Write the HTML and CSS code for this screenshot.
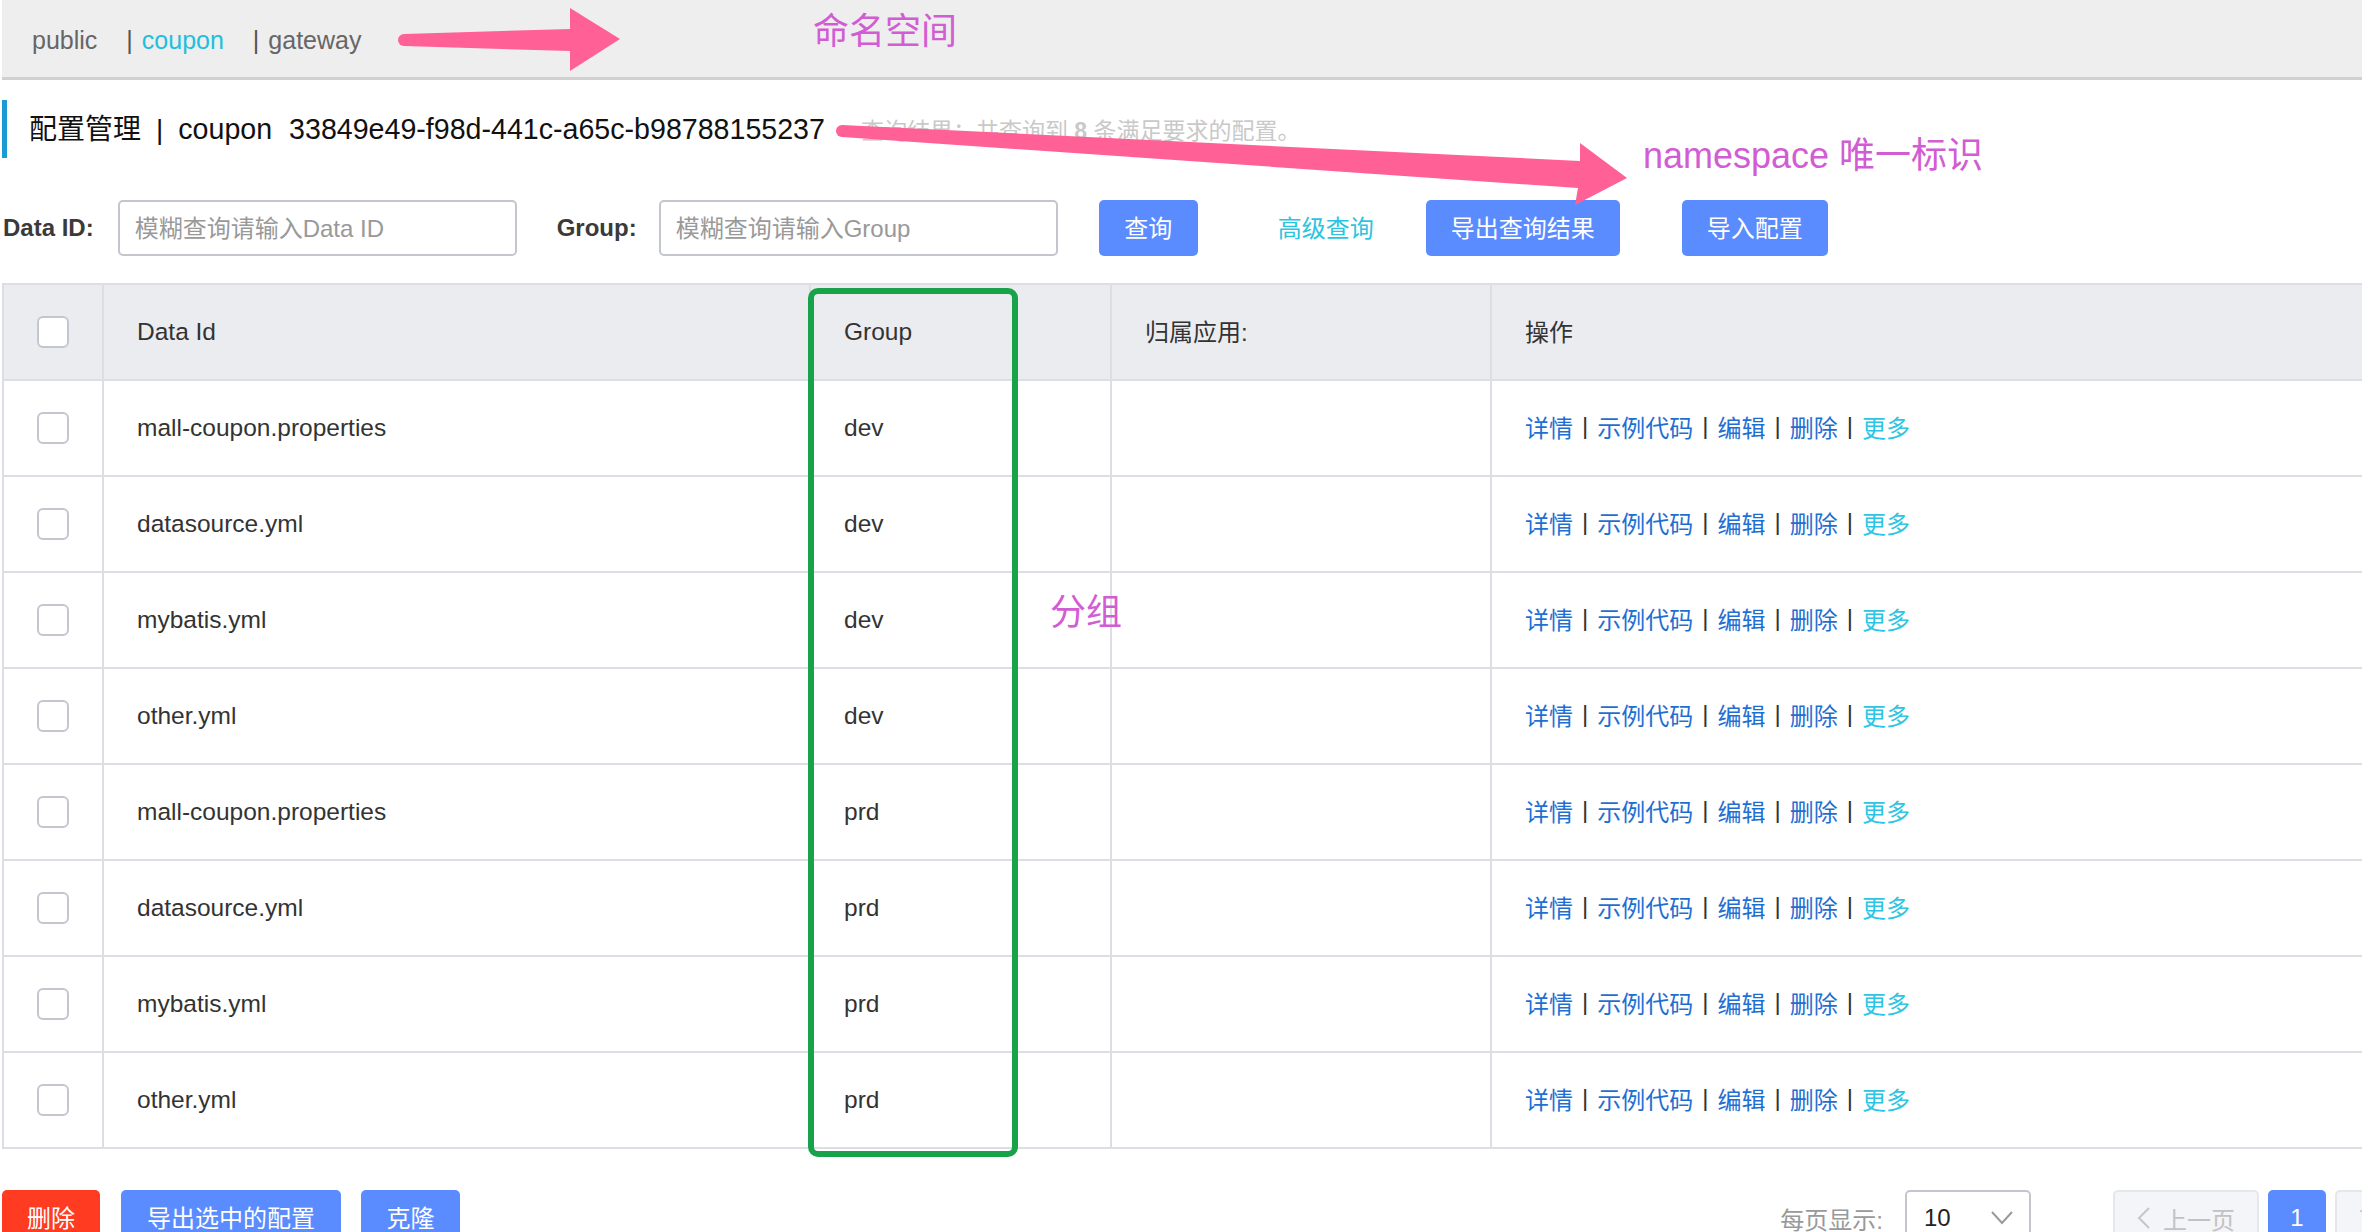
FILE: index.html
```html
<!DOCTYPE html>
<html lang="zh-CN">
<head>
<meta charset="utf-8">
<title>配置管理</title>
<link rel="stylesheet" href="styles.css">
</head>
<body>
<div class="page">
  <div class="ns-bar">
    <span class="ns">public</span>
    <span class="ns"><span class="ns-sep">|</span><span class="ns-active">coupon</span></span>
    <span class="ns"><span class="ns-sep">|</span>gateway</span>
  </div>

  <div class="title-row">
    <h1 class="title">配置管理<span class="t-sep">|</span><span class="lat">coupon</span><span class="lat ns-id">33849e49-f98d-441c-a65c-b98788155237</span></h1>
    <span class="result">查询结果：共查询到 <b>8</b> 条满足要求的配置。</span>
  </div>

  <div class="filter">
    <label class="f-label">Data ID:</label>
    <div class="input">模糊查询请输入Data ID</div>
    <label class="f-label f-label-group">Group:</label>
    <div class="input">模糊查询请输入Group</div>
    <button class="btn btn-query">查询</button>
    <span class="adv">高级查询</span>
    <button class="btn btn-export">导出查询结果</button>
    <button class="btn btn-import">导入配置</button>
  </div>

  <div class="table">
    <div class="row head">
      <div class="cell c-cb"><span class="cb"></span></div>
      <div class="cell">Data Id</div>
      <div class="cell">Group</div>
      <div class="cell cjk">归属应用:</div>
      <div class="cell cjk">操作</div>
    </div>
    <div class="row">
      <div class="cell c-cb"><span class="cb"></span></div>
      <div class="cell">mall-coupon.properties</div>
      <div class="cell">dev</div>
      <div class="cell"></div>
      <div class="cell ops"><a class="op">详情</a><span class="op-sep">|</span><a class="op">示例代码</a><span class="op-sep">|</span><a class="op">编辑</a><span class="op-sep">|</span><a class="op">删除</a><span class="op-sep">|</span><a class="op more">更多</a></div>
    </div>
    <div class="row">
      <div class="cell c-cb"><span class="cb"></span></div>
      <div class="cell">datasource.yml</div>
      <div class="cell">dev</div>
      <div class="cell"></div>
      <div class="cell ops"><a class="op">详情</a><span class="op-sep">|</span><a class="op">示例代码</a><span class="op-sep">|</span><a class="op">编辑</a><span class="op-sep">|</span><a class="op">删除</a><span class="op-sep">|</span><a class="op more">更多</a></div>
    </div>
    <div class="row">
      <div class="cell c-cb"><span class="cb"></span></div>
      <div class="cell">mybatis.yml</div>
      <div class="cell">dev</div>
      <div class="cell"></div>
      <div class="cell ops"><a class="op">详情</a><span class="op-sep">|</span><a class="op">示例代码</a><span class="op-sep">|</span><a class="op">编辑</a><span class="op-sep">|</span><a class="op">删除</a><span class="op-sep">|</span><a class="op more">更多</a></div>
    </div>
    <div class="row">
      <div class="cell c-cb"><span class="cb"></span></div>
      <div class="cell">other.yml</div>
      <div class="cell">dev</div>
      <div class="cell"></div>
      <div class="cell ops"><a class="op">详情</a><span class="op-sep">|</span><a class="op">示例代码</a><span class="op-sep">|</span><a class="op">编辑</a><span class="op-sep">|</span><a class="op">删除</a><span class="op-sep">|</span><a class="op more">更多</a></div>
    </div>
    <div class="row">
      <div class="cell c-cb"><span class="cb"></span></div>
      <div class="cell">mall-coupon.properties</div>
      <div class="cell">prd</div>
      <div class="cell"></div>
      <div class="cell ops"><a class="op">详情</a><span class="op-sep">|</span><a class="op">示例代码</a><span class="op-sep">|</span><a class="op">编辑</a><span class="op-sep">|</span><a class="op">删除</a><span class="op-sep">|</span><a class="op more">更多</a></div>
    </div>
    <div class="row">
      <div class="cell c-cb"><span class="cb"></span></div>
      <div class="cell">datasource.yml</div>
      <div class="cell">prd</div>
      <div class="cell"></div>
      <div class="cell ops"><a class="op">详情</a><span class="op-sep">|</span><a class="op">示例代码</a><span class="op-sep">|</span><a class="op">编辑</a><span class="op-sep">|</span><a class="op">删除</a><span class="op-sep">|</span><a class="op more">更多</a></div>
    </div>
    <div class="row">
      <div class="cell c-cb"><span class="cb"></span></div>
      <div class="cell">mybatis.yml</div>
      <div class="cell">prd</div>
      <div class="cell"></div>
      <div class="cell ops"><a class="op">详情</a><span class="op-sep">|</span><a class="op">示例代码</a><span class="op-sep">|</span><a class="op">编辑</a><span class="op-sep">|</span><a class="op">删除</a><span class="op-sep">|</span><a class="op more">更多</a></div>
    </div>
    <div class="row">
      <div class="cell c-cb"><span class="cb"></span></div>
      <div class="cell">other.yml</div>
      <div class="cell">prd</div>
      <div class="cell"></div>
      <div class="cell ops"><a class="op">详情</a><span class="op-sep">|</span><a class="op">示例代码</a><span class="op-sep">|</span><a class="op">编辑</a><span class="op-sep">|</span><a class="op">删除</a><span class="op-sep">|</span><a class="op more">更多</a></div>
    </div>
  </div>

  <div class="footer">
    <div class="actions">
      <button class="btn btn-danger">删除</button>
      <button class="btn btn-exp-sel">导出选中的配置</button>
      <button class="btn btn-clone">克隆</button>
    </div>
    <div class="pager">
      <span class="per-page">每页显示:</span>
      <div class="select"><span>10</span><svg class="chev" width="22" height="14" viewBox="0 0 22 14"><polyline points="1,1 11,12 21,1" fill="none" stroke="#9a9a9a" stroke-width="2"/></svg></div>
      <button class="pg pg-prev"><svg width="14" height="22" viewBox="0 0 14 22"><polyline points="12,1 2,11 12,21" fill="none" stroke="#c6c6c6" stroke-width="2"/></svg><span>上一页</span></button>
      <button class="pg-num">1</button>
      <button class="pg pg-next"><span>下一页</span><svg width="14" height="22" viewBox="0 0 14 22"><polyline points="2,1 12,11 2,21" fill="none" stroke="#c6c6c6" stroke-width="2"/></svg></button>
    </div>
  </div>

  <svg class="arrows" width="2362" height="260" viewBox="0 0 2362 260">
    <circle cx="404" cy="40" r="6" fill="#ff6196"/>
    <polygon fill="#ff6196" points="404,34 570,29 570,8 620,39 570,71 570,51 404,46"/>
    <circle cx="842" cy="131" r="6" fill="#ff6196"/>
    <polygon fill="#ff6196" points="842,125 1580,161 1580,143 1627,178 1575,205 1578,188 842,137"/>
  </svg>
  <div class="note note-ns">命名空间</div>
  <div class="note note-id">namespace 唯一标识</div>
  <div class="note note-group">分组</div>
  <div class="group-box"></div>
</div>
</body>
</html>
```

FILE: styles.css
```css
html, body {
  margin: 0;
  padding: 0;
  overflow: hidden;
  background: #fff;
}
body {
  font-family: "Liberation Sans", "Noto Sans CJK SC", sans-serif;
  color: #333;
  font-size: 24px;
  padding-left: 2px;
}
.page {
  position: relative;
  width: 2479px;
}

/* namespace bar */
.ns-bar {
  height: 75px;
  background: #eeeeee;
  border-bottom: 3px solid #d0d0d0;
  display: flex;
  align-items: center;
  padding-left: 30px;
  padding-top: 2px;
  font-size: 25px;
  color: #666;
  line-height: 30px;
}
.ns { margin-right: 29px; white-space: nowrap; }
.ns-sep { color: #555; margin-right: 9px; }
.ns-active { color: #22bfdc; }

/* title */
.title-row {
  margin-top: 20px;
  height: 58px;
  border-left: 5px solid #1b9ad6;
  display: flex;
  align-items: center;
  padding-left: 22px;
  white-space: nowrap;
}
.title {
  margin: 0;
  font-weight: normal;
  font-size: 28px;
  line-height: 58px;
  color: #111;
}
.lat { font-size: 28.6px; }
.t-sep { margin: 0 15px; }
.ns-id { margin-left: 17px; }
.result {
  margin-left: 36px;
  font-size: 23px;
  color: #c9c9c9;
}
.result b { font-weight: bold; }

/* filter */
.filter {
  margin-top: 42px;
  height: 56px;
  display: flex;
  align-items: center;
  white-space: nowrap;
}
.f-label {
  font-weight: bold;
  color: #3a3a3a;
  margin-left: 1px;
  margin-right: 24px;
}
.f-label-group { margin-left: 40px; margin-right: 22px; }
.input {
  width: 399px;
  height: 56px;
  box-sizing: border-box;
  border: 2px solid #c4c6cf;
  border-radius: 5px;
  padding-left: 15px;
  padding-bottom: 3px;
  display: flex;
  align-items: center;
  color: #999;
}
.btn {
  height: 56px;
  border: none;
  border-radius: 5px;
  background: #5a8cff;
  color: #fff;
  font-family: inherit;
  font-size: 24px;
  padding: 0 0 3px 0;
  cursor: pointer;
}
.btn-query { margin-left: 41px; width: 99px; }
.adv { margin-left: 80px; color: #2bc4e0; padding-bottom: 3px; }
.btn-export { margin-left: 52px; width: 194px; }
.btn-import { margin-left: 62px; width: 146px; }

/* table */
.table {
  margin-top: 27px;
  border-top: 2px solid #dcdee3;
  border-left: 2px solid #dcdee3;
}
.row {
  display: grid;
  grid-template-columns: 100px 707px 301px 380px 1fr;
}
.cell {
  height: 96px;
  box-sizing: border-box;
  border-right: 2px solid #dcdee3;
  border-bottom: 2px solid #dcdee3;
  display: flex;
  align-items: center;
  padding-left: 33px;
  white-space: nowrap;
  color: #333;
  font-size: 24.5px;
}
.cell.cjk, .cell.ops { font-size: 24px; padding-bottom: 4px; }
.head .cell { background: #ebecf0; }
.c-cb { padding-left: 0; justify-content: center; }
.cb {
  width: 32px;
  height: 32px;
  box-sizing: border-box;
  border: 2px solid #c4c6cf;
  border-radius: 6px;
  background: #fff;
}
.op { color: #1f6fd3; }
.op.more { color: #2ec4e4; }
.op-sep { margin: 0 9px; color: #333; }

/* footer */
.footer {
  margin-top: 41px;
  display: flex;
  justify-content: space-between;
  align-items: center;
}
.actions { display: flex; }
.btn-danger { background: #ff3b22; width: 98px; }
.btn-exp-sel { margin-left: 21px; width: 220px; }
.btn-clone { margin-left: 20px; width: 99px; }
.pager {
  display: flex;
  align-items: center;
  white-space: nowrap;
}
.per-page { color: #999; margin-right: 22px; }
.select {
  width: 126px;
  height: 56px;
  box-sizing: border-box;
  border: 2px solid #c4c6cf;
  border-radius: 5px;
  display: flex;
  align-items: center;
  justify-content: space-between;
  padding: 0 16px 0 17px;
  color: #222;
}
.chev { display: block; }
.pg {
  height: 56px;
  width: 146px;
  box-sizing: border-box;
  background: #f4f5f8;
  border: 2px solid #e6e7eb;
  border-radius: 5px;
  color: #c2c2c2;
  font-family: inherit;
  font-size: 24px;
  display: flex;
  align-items: center;
  justify-content: center;
  gap: 12px;
  padding: 0;
}
.pg-prev { margin-left: 82px; }
.pg-next { margin-left: 9px; }
.pg-num {
  margin-left: 9px;
  width: 58px;
  height: 56px;
  border: none;
  border-radius: 5px;
  background: #5a8cff;
  color: #fff;
  font-family: inherit;
  font-size: 24px;
  padding: 0;
}

/* annotations */
.arrows {
  position: absolute;
  left: -2px;
  top: 0;
  pointer-events: none;
}
.note {
  position: absolute;
  color: #d25cd4;
  font-size: 36px;
  line-height: 40px;
  white-space: nowrap;
}
.note-ns { left: 811px; top: 12px; }
.note-id { left: 1641px; top: 136px; }
.note-group { left: 1048px; top: 593px; }
.group-box {
  position: absolute;
  left: 806px;
  top: 288px;
  width: 210px;
  height: 869px;
  box-sizing: border-box;
  border: 6px solid #18a34a;
  border-radius: 10px;
}
```
